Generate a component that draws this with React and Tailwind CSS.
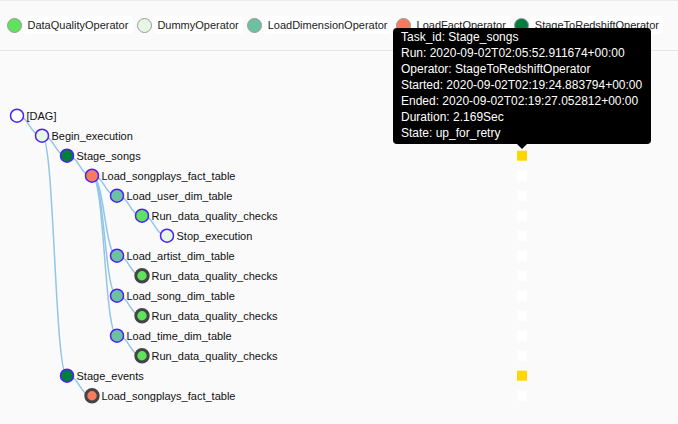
const LEGEND = [
  { name: 'DataQualityOperator', color: '#5fe25c' },
  { name: 'DummyOperator', color: '#e6f8e3' },
  { name: 'LoadDimensionOperator', color: '#6cc2a0' },
  { name: 'LoadFactOperator', color: '#f97b5f' },
  { name: 'StageToRedshiftOperator', color: '#017e3c' },
]

const COLORS = {
  dag: '#ffffff',
  dummy: '#e6f8e3',
  stage: '#017e3c',
  fact: '#f97b5f',
  dim: '#6cc2a0',
  dq: '#5fe25c',
}

// depth, parent index, operator colour, collapsed (grey ring), state square
const NODES = [
  { label: '[DAG]', depth: 0, parent: null, fill: COLORS.dag, square: null },
  { label: 'Begin_execution', depth: 1, parent: 0, fill: COLORS.dummy, square: '#fff' },
  { label: 'Stage_songs', depth: 2, parent: 1, fill: COLORS.stage, square: '#ffd700' },
  { label: 'Load_songplays_fact_table', depth: 3, parent: 2, fill: COLORS.fact, square: '#fff' },
  { label: 'Load_user_dim_table', depth: 4, parent: 3, fill: COLORS.dim, square: '#fff' },
  { label: 'Run_data_quality_checks', depth: 5, parent: 4, fill: COLORS.dq, square: '#fff' },
  { label: 'Stop_execution', depth: 6, parent: 5, fill: COLORS.dummy, square: '#fff' },
  { label: 'Load_artist_dim_table', depth: 4, parent: 3, fill: COLORS.dim, square: '#fff' },
  { label: 'Run_data_quality_checks', depth: 5, parent: 7, fill: COLORS.dq, collapsed: true, square: '#fff' },
  { label: 'Load_song_dim_table', depth: 4, parent: 3, fill: COLORS.dim, square: '#fff' },
  { label: 'Run_data_quality_checks', depth: 5, parent: 9, fill: COLORS.dq, collapsed: true, square: '#fff' },
  { label: 'Load_time_dim_table', depth: 4, parent: 3, fill: COLORS.dim, square: '#fff' },
  { label: 'Run_data_quality_checks', depth: 5, parent: 11, fill: COLORS.dq, collapsed: true, square: '#fff' },
  { label: 'Stage_events', depth: 2, parent: 1, fill: COLORS.stage, square: '#ffd700' },
  { label: 'Load_songplays_fact_table', depth: 3, parent: 13, fill: COLORS.fact, collapsed: true, square: '#fff' },
]

const TIP = [
  'Task_id: Stage_songs',
  'Run: 2020-09-02T02:05:52.911674+00:00',
  'Operator: StageToRedshiftOperator',
  'Started: 2020-09-02T02:19:24.883794+00:00',
  'Ended: 2020-09-02T02:19:27.052812+00:00',
  'Duration: 2.169Sec',
  'State: up_for_retry',
]

// svg starts below border (1) + legend (49) + rule (1)
const TOP = 51
const px = (n) => 17 + n.depth * 25
const py = (i) => 115.7 + i * 20 - TOP

function Legend() {
  return (
    <div className="flex items-center gap-[4px] pl-[7px] pt-[15px] pb-[16px] h-[49px]">
      {LEGEND.map((l) => (
        <div key={l.name} className="flex items-center gap-[1px]">
          <span
            className="block w-[15px] h-[15px] rounded-full border border-[#9a9a9a]"
            style={{ background: l.color }}
          />
          <span className="h-[18px] flex items-center px-[4.5px] rounded-[4px] bg-white text-[11px] text-[#222]">
            {l.name}
          </span>
        </div>
      ))}
    </div>
  )
}

function Tree() {
  return (
    <svg width="678" height={424 - TOP} className="block">
      {NODES.map((n, i) => {
        if (n.parent === null) return null
        const p = NODES[n.parent]
        const sx = px(p), sy = py(n.parent), tx = px(n), ty = py(i)
        const mx = (sx + tx) / 2
        return (
          <path
            key={'l' + i}
            d={`M${sx},${sy}C${mx},${sy} ${mx},${ty} ${tx},${ty}`}
            fill="none"
            stroke="#92c5e6"
            strokeWidth="1.5"
          />
        )
      })}
      {NODES.map((n, i) => (
        <g key={'n' + i}>
          <circle
            cx={px(n)}
            cy={py(i)}
            r={n.collapsed ? 6.2 : 6.5}
            fill={n.fill}
            stroke={n.collapsed ? '#444' : '#4a22f6'}
            strokeWidth={n.collapsed ? 3 : 1.5}
          />
          <text x={px(n) + 9.5} y={py(i) + 4} fontSize="11" fill="#111">
            {n.label}
          </text>
          {n.square && (
            <rect x="517" y={py(i) - 5} width="10" height="10" fill={n.square} />
          )}
        </g>
      ))}
    </svg>
  )
}

export default function App() {
  return (
    <div
      className="relative w-[678px] h-[424px] overflow-hidden bg-[#fafafa] border-t border-[#ececec]"
      style={{ fontFamily: '"Liberation Sans", Arial, sans-serif' }}
    >
      <Legend />
      <div className="border-t border-[#e6e6e6]" />
      <Tree />

      {/* hover tooltip for Stage_songs */}
      <div className="absolute left-[393px] top-[26.7px] w-[258px] rounded-[4px] bg-black text-white text-[12px] leading-[16px] pl-[8px] pt-[1px] pb-[3px]">
        {TIP.map((t) => (
          <div key={t} className="whitespace-nowrap">{t}</div>
        ))}
        <div className="absolute left-[124px] -bottom-[5px] w-0 h-0 border-l-[5px] border-r-[5px] border-t-[5px] border-l-transparent border-r-transparent border-t-black" />
      </div>
    </div>
  )
}
